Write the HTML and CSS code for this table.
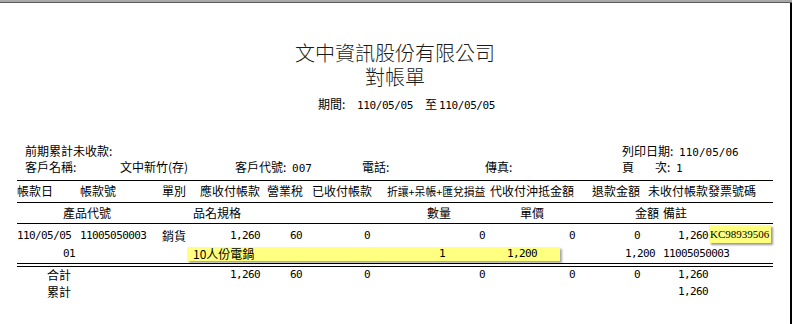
FILE: index.html
```html
<!DOCTYPE html>
<html lang="zh-Hant">
<head>
<meta charset="utf-8">
<title>對帳單</title>
<link rel="stylesheet" href="styles.css">
</head>
<body>
<div class="topbar"></div>
<div class="page">
  <header class="title">
    <div class="company">文中資訊股份有限公司</div>
    <div class="doc">對帳單</div>
    <div class="period">
      <span class="plabel">期間:</span>
      <span class="np">110/05/05</span>
      <span class="pto">至</span>
      <span class="np pend">110/05/05</span>
    </div>
  </header>

  <section class="report">
    <div class="info">
      <div class="info-row">
        <span class="wide">前期累計未收款:</span>
        <span>列印日期: <span class="nh">110/05/06</span></span>
      </div>
      <div class="info-row">
        <span>客戶名稱:</span>
        <span>文中新竹(存)</span>
        <span>客戶代號: <span class="nh">007</span></span>
        <span>電話:</span>
        <span>傳真:</span>
        <span><span class="page-lbl">頁</span>次: <span class="nh">1</span></span>
      </div>
    </div>

    <div class="hrow h1">
      <span>帳款日</span>
      <span>帳款號</span>
      <span>單別</span>
      <span>應收付帳款</span>
      <span>營業稅</span>
      <span>已收付帳款</span>
      <span class="tight">折讓+呆帳+匯兌損益</span>
      <span>代收付沖抵金額</span>
      <span>退款金額</span>
      <span>未收付帳款發票號碼</span>
    </div>

    <div class="hrow h2">
      <span></span>
      <span>產品代號</span>
      <span>品名規格</span>
      <span>數量</span>
      <span>單價</span>
      <span>金額</span>
      <span>備註</span>
    </div>

    <div class="data">
      <div class="drow cols">
        <span class="n">110/05/05</span>
        <span class="n">11005050003</span>
        <span>銷貨</span>
        <span class="n r">1,260</span>
        <span class="n r">60</span>
        <span class="n r">0</span>
        <span class="n r">0</span>
        <span class="n r">0</span>
        <span class="n r">0</span>
        <span class="n r">1,260</span>
        <span class="kc">KC98939506</span>
      </div>
      <div class="drow r2">
        <span class="n r">01</span>
        <span></span>
        <div class="hl">
          <span>10人份電鍋</span>
          <span class="n r">1</span>
          <span class="n r">1,200</span>
        </div>
        <span class="n r">1,200</span>
        <span></span>
        <span class="n">11005050003</span>
      </div>
    </div>

    <div class="totals">
      <div class="trow cols">
        <span class="tlabel">合計</span>
        <span></span>
        <span></span>
        <span class="n r">1,260</span>
        <span class="n r">60</span>
        <span class="n r">0</span>
        <span class="n r">0</span>
        <span class="n r">0</span>
        <span class="n r">0</span>
        <span class="n r">1,260</span>
      </div>
      <div class="trow trow2 cols">
        <span class="tlabel">累計</span>
        <span class="n r last">1,260</span>
      </div>
    </div>
  </section>
</div>
</body>
</html>
```

FILE: styles.css
```css
html, body {
  margin: 0;
  padding: 0;
  background: #ffffff;
}

body {
  font-family: "Noto Sans CJK TC", "Noto Sans", sans-serif;
  font-size: 12px;
  color: #000000;
  width: 792px;
  height: 324px;
  overflow: hidden;
}

.topbar {
  height: 2px;
  background: #a8a8a8;
  border-bottom: 1px solid #5a5a5a;
}

.page {
  width: 792px;
  height: 321px;
  box-sizing: border-box;
  border-right: 2px solid #000000;
  overflow: hidden;
}

/* ---------- title ---------- */
.title {
  padding-top: 38px;
}

.company,
.doc {
  font-size: 20px;
  font-weight: 300;
  line-height: 24px;
  text-align: center;
  color: #1a1a1a;
}

.period {
  margin-top: 7px;
  height: 16px;
  line-height: 16px;
  padding-left: 318px;
  display: flex;
  align-items: baseline;
}

.plabel {
  width: 39px;
}

.np {
  font-family: "DejaVu Sans Mono", monospace;
  font-size: 11px;
  letter-spacing: -0.4px;
}

.pto {
  margin-left: 12px;
}

.pend {
  margin-left: 2px;
}

/* ---------- report ---------- */
.report {
  margin-left: 17px;
  width: 756px;
}

.n {
  font-family: "DejaVu Sans Mono", monospace;
  font-size: 11px;
  letter-spacing: -0.6px;
  white-space: nowrap;
}

.nh {
  font-family: "DejaVu Sans Mono", monospace;
  font-size: 11px;
  margin-left: 3px;
}

.r {
  text-align: right;
}

.info {
  margin-top: 31px;
  padding-bottom: 5px;
  border-bottom: 1px solid #000000;
}

.info-row {
  display: grid;
  grid-template-columns: 95px 115px 127px 123px 137px 1fr;
  padding-left: 8px;
  height: 16px;
  line-height: 16px;
  white-space: nowrap;
}

.info-row .wide {
  grid-column: 1 / 6;
}

.page-lbl {
  display: inline-block;
  width: 33px;
}

.hrow {
  display: grid;
  padding-top: 2px;
  line-height: 16px;
  border-bottom: 1px solid #000000;
  white-space: nowrap;
}

.h1 {
  height: 19px;
  grid-template-columns: 63px 82px 38px 67px 45px 75px 103px 102px 56px 1fr;
}

.h1 .tight {
  font-size: 10.8px;
}

.h2 {
  height: 18px;
  grid-template-columns: 46px 130px 234px 93px 115px 28px 1fr;
}

.data {
  padding-top: 3px;
  border-bottom: 1px solid #000000;
}

.cols {
  display: grid;
  grid-template-columns: 63px 82px 38px 60px 42px 68px 115px 90px 65px 68px 1fr;
}

.drow {
  height: 18px;
  line-height: 18px;
}

.kc {
  margin-left: 1px;
  margin-top: -2px;
  width: 62px;
  height: 18px;
  padding-left: 1px;
  box-sizing: border-box;
  background: #ffff80;
  box-shadow: 2px 2px 2px rgba(0, 0, 0, 0.4);
  font-family: "Liberation Serif", serif;
  font-size: 11px;
  line-height: 18px;
  white-space: nowrap;
}

.r2 {
  display: grid;
  grid-template-columns: 58px 112px 373px 95px 8px 1fr;
}

.hl {
  margin-top: 2px;
  height: 14px;
  line-height: 14px;
  padding-left: 6px;
  background: #ffff80;
  box-shadow: 2px 2px 2px rgba(0, 0, 0, 0.35);
  display: grid;
  grid-template-columns: 200px 52px 92px;
  white-space: nowrap;
}

.totals {
  margin-top: 2px;
  border-top: 1px solid #000000;
}

.trow {
  height: 16px;
  line-height: 16px;
}

.trow2 {
  height: 17px;
  line-height: 17px;
}

.tlabel {
  padding-left: 30px;
}

.trow2 .last {
  grid-column: 10;
}
```
